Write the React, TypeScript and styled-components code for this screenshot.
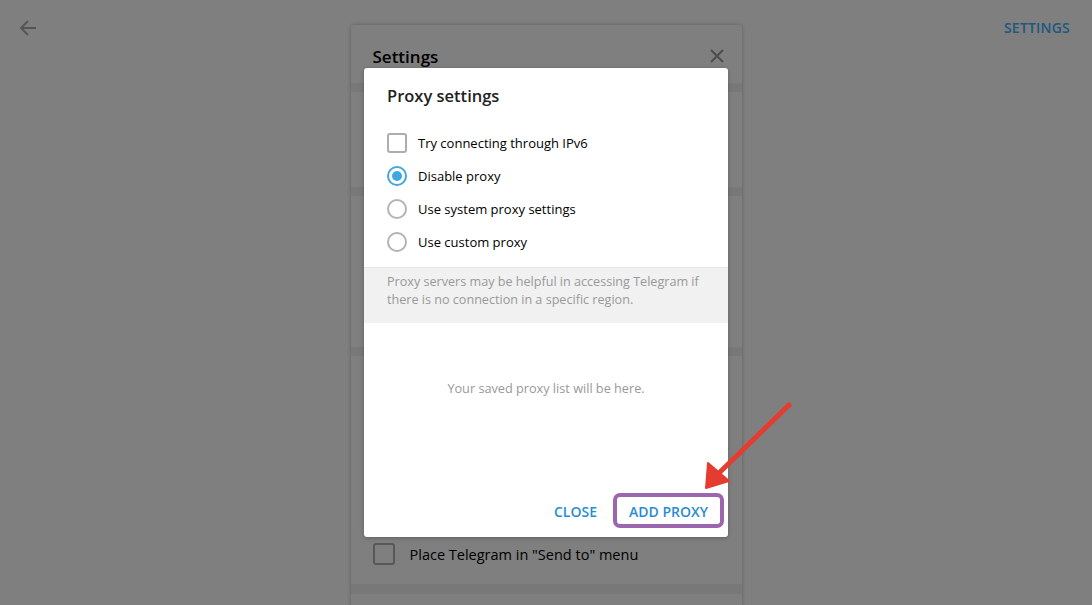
import React from 'react'
import styled, { createGlobalStyle } from 'styled-components'

const GlobalStyle = createGlobalStyle`
  html, body {
    margin: 0;
    padding: 0;
    background: #ffffff;
  }
  body {
    font-family: "Open Sans", "Noto Sans", sans-serif;
    overflow: hidden;
  }
`

const Page = styled.div`
  position: relative;
  width: 1092px;
  height: 605px;
  overflow: hidden;
  background: #ffffff;
`

const TopBar = styled.div`
  height: 55px;
  display: flex;
  align-items: center;
  justify-content: space-between;
  padding: 0 22px 0 18px;
  box-sizing: border-box;
  margin-bottom: -30px;
`

const BackButton = styled.div`
  width: 20px;
  height: 20px;
  display: flex;
  align-items: center;
  justify-content: center;
`

const TopLink = styled.span`
  font-size: 14px;
  font-weight: 600;
  color: #40b0ff;
  letter-spacing: 0.2px;
`

// settings panel sitting under the dimmed layer
const Panel = styled.div`
  width: 391px;
  margin: 0 auto;
  background: #ffffff;
  border-radius: 3px 3px 0 0;
  box-shadow: 0 0 4px rgba(0, 0, 0, 0.25);
  display: flex;
  flex-direction: column;
`

const PanelHeader = styled.div`
  height: 58px;
  display: flex;
  align-items: center;
  justify-content: space-between;
  padding: 4px 18px 0 22px;
  box-sizing: border-box;
`

const PanelTitle = styled.span`
  font-size: 17px;
  font-weight: 600;
  color: #000000;
`

const Section = styled.div<{ $h: number }>`
  height: ${({ $h }) => $h}px;
  display: flex;
  flex-direction: column;
  justify-content: flex-end;
  padding: 0 22px;
  box-sizing: border-box;
`

const Band = styled.div<{ $h: number }>`
  height: ${({ $h }) => $h}px;
  background: #f1f1f1;
`

const PanelRow = styled.div`
  height: 48px;
  display: flex;
  align-items: center;
  gap: 15px;
  margin-bottom: 6px;
`

const BigBox = styled.span`
  width: 18px;
  height: 18px;
  border: 2px solid #b0b0b0;
  border-radius: 3px;
`

const PanelLabel = styled.span`
  font-size: 14.5px;
  color: #000000;
`

const Dim = styled.div`
  position: absolute;
  inset: 0;
  background: rgba(0, 0, 0, 0.5);
`

const Dialog = styled.div`
  position: absolute;
  top: 68px;
  left: 364px;
  width: 364px;
  height: 469px;
  background: #ffffff;
  border-radius: 3px;
  box-shadow: 0 1px 4px rgba(0, 0, 0, 0.25);
  display: flex;
  flex-direction: column;
`

const DialogTitle = styled.div`
  font-size: 16.5px;
  font-weight: 600;
  color: #222222;
  line-height: 22px;
  padding: 17px 23px 0;
`

const Options = styled.div`
  display: flex;
  flex-direction: column;
  padding: 19px 23px 0;
`

const Option = styled.div`
  height: 33px;
  display: flex;
  align-items: center;
  gap: 11px;
  font-size: 13px;
  color: #000000;
`

const Check = styled.span`
  width: 16px;
  height: 16px;
  border: 2px solid #adadad;
  border-radius: 3px;
`

const Radio = styled.span<{ $on?: boolean }>`
  width: 16px;
  height: 16px;
  border: 2px solid ${({ $on }) => ($on ? '#40a7e3' : '#b3b3b3')};
  border-radius: 50%;
  display: flex;
  align-items: center;
  justify-content: center;
  &::after {
    content: '';
    width: 10px;
    height: 10px;
    border-radius: 50%;
    background: ${({ $on }) => ($on ? '#40a7e3' : 'transparent')};
  }
`

const About = styled.div`
  margin-top: 9px;
  background: #f1f1f1;
  border-top: 1px solid #e7e7e7;
  padding: 5px 23px 14px;
  font-size: 12.6px;
  line-height: 18px;
  color: #999999;
`

const Empty = styled.div`
  flex: 1;
  display: flex;
  align-items: flex-start;
  justify-content: center;
  padding-top: 56px;
  font-size: 12.7px;
  color: #999999;
`

const Buttons = styled.div`
  display: flex;
  justify-content: flex-end;
  gap: 8px;
  padding: 0 8px 8px;
`

const Button = styled.span<{ $marked?: boolean }>`
  position: relative;
  height: 36px;
  display: flex;
  align-items: center;
  padding: 0 12px;
  font-size: 14px;
  font-weight: 600;
  color: #2b8bd3;
  &::after {
    content: '';
    display: ${({ $marked }) => ($marked ? 'block' : 'none')};
    position: absolute;
    top: 0;
    bottom: 1px;
    left: -4px;
    right: -4px;
    border: 4px solid #9b66ad;
    border-radius: 7px;
  }
`

const Arrow = styled.svg`
  position: absolute;
  left: 0;
  top: 0;
  pointer-events: none;
`

export default function App() {
  return (
    <>
      <GlobalStyle />
      <Page>
        <TopBar>
          <BackButton>
            <svg width="18" height="18" viewBox="0 0 18 18">
              <path d="M17 9H2M9 2L2 9l7 7" fill="none" stroke="#aaaaaa" strokeWidth="2" />
            </svg>
          </BackButton>
          <TopLink>SETTINGS</TopLink>
        </TopBar>
        <Panel>
          <PanelHeader>
            <PanelTitle>Settings</PanelTitle>
            <svg width="14" height="14" viewBox="0 0 14 14">
              <path d="M1 1l12 12M13 1L1 13" stroke="#999999" strokeWidth="2" />
            </svg>
          </PanelHeader>
          <Band $h={9} />
          <Section $h={95} />
          <Band $h={9} />
          <Section $h={151} />
          <Band $h={9} />
          <Section $h={228}>
            <PanelRow>
              <BigBox />
              <PanelLabel>Place Telegram in "Send to" menu</PanelLabel>
            </PanelRow>
          </Section>
          <Band $h={10} />
          <Section $h={40} />
        </Panel>
        <Dim />
        <Dialog>
          <DialogTitle>Proxy settings</DialogTitle>
          <Options>
            <Option>
              <Check />
              Try connecting through IPv6
            </Option>
            <Option>
              <Radio $on />
              Disable proxy
            </Option>
            <Option>
              <Radio />
              Use system proxy settings
            </Option>
            <Option>
              <Radio />
              Use custom proxy
            </Option>
          </Options>
          <About>
            Proxy servers may be helpful in accessing Telegram if there is no connection in a specific region.
          </About>
          <Empty>Your saved proxy list will be here.</Empty>
          <Buttons>
            <Button>CLOSE</Button>
            <Button $marked>ADD PROXY</Button>
          </Buttons>
        </Dialog>
        <Arrow width="1092" height="605">
          <line x1="789" y1="405" x2="718" y2="474" stroke="#e53c30" strokeWidth="5" strokeLinecap="round" />
          <polygon points="706,488 708,463 729,481" fill="#e53c30" stroke="#e53c30" strokeWidth="2" strokeLinejoin="round" />
        </Arrow>
      </Page>
    </>
  )
}
